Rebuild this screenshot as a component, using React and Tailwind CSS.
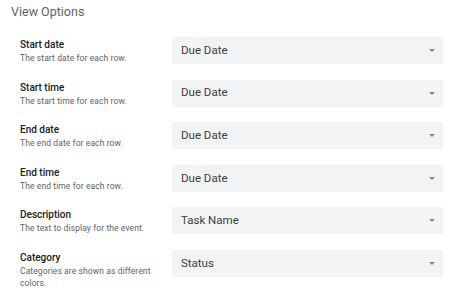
import React from 'react';

const rows = [
    { title: 'Start date', desc: 'The start date for each row.', value: 'Due Date' },
    { title: 'Start time', desc: 'The start time for each row.', value: 'Due Date' },
    { title: 'End date', desc: 'The end date for each row.', value: 'Due Date' },
    { title: 'End time', desc: 'The end time for each row.', value: 'Due Date' },
    { title: 'Description', desc: 'The text to display for the event.', value: 'Task Name' },
    { title: 'Category', desc: 'Categories are shown as different colors.', value: 'Status' },
];

const Select = ({ value }) => (
    <div className="w-[271px] h-[27px] bg-[#f1f3f4] rounded-[2px] flex items-center justify-between pl-[9px] pr-[8px] shrink-0">
        <span className="text-[11.5px] text-[#3c4043]">{value}</span>
        <svg width="6" height="3" viewBox="0 0 6 3">
            <path d="M0 0 L6 0 L3 3 Z" fill="#80868b" />
        </svg>
    </div>
);

const App = () => {
    return (
        <div className="w-[471px] h-[300px] bg-white overflow-hidden font-['Roboto',sans-serif]">
            <div className="pl-[11px] pt-[3px] h-[37px] text-[12.5px] text-[#5f6368]">View Options</div>
            <div className="flex flex-col gap-[15.6px] pl-[20px]">
                {rows.map((r) => (
                    <div key={r.title} className="flex items-start">
                        <div className="w-[152px] pt-[1px]">
                            <div className="text-[10px] font-medium text-[#202124] leading-[13px]">{r.title}</div>
                            <div className="text-[8.5px] text-[#5f6368] leading-[12px] mt-[1px] tracking-[0.1px]">{r.desc}</div>
                        </div>
                        <Select value={r.value} />
                    </div>
                ))}
            </div>
        </div>
    );
};

export default App;
